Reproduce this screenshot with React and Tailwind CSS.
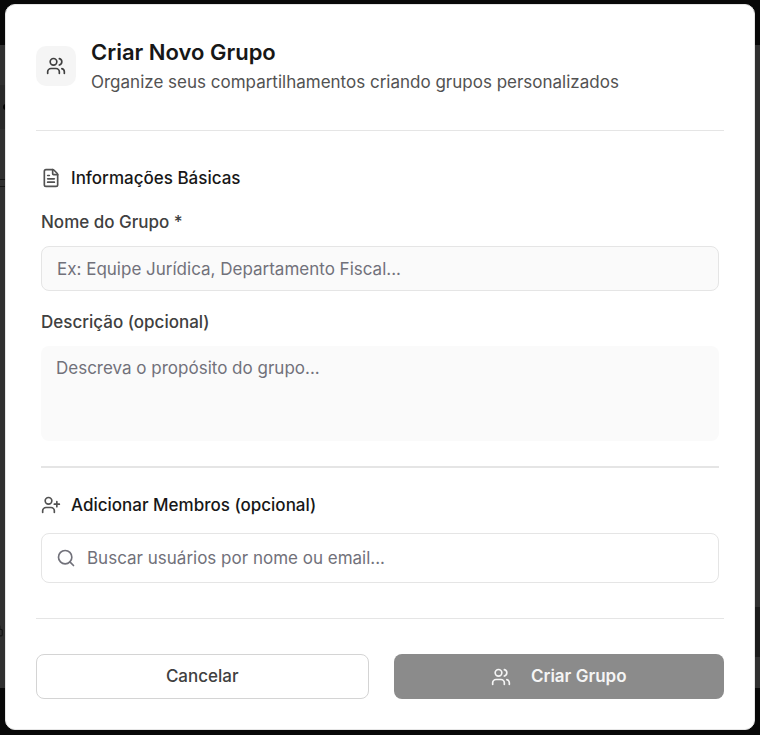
import { useState } from "react";
import { Users, FileText, UserPlus, Search, Lock } from "lucide-react";

function SectionTitle({ icon: Icon, children }) {
  return (
    <h3 className="flex items-center gap-2.5 text-[17px] leading-6 font-medium text-neutral-900">
      <Icon size={20} strokeWidth={2} className="text-neutral-600" />
      {children}
    </h3>
  );
}

// dimmed library page under the dialog
function LibraryPage() {
  return (
    <div aria-hidden="true" className="absolute inset-0 flex flex-col overflow-hidden bg-[#080808]">
      <div className="flex h-[45px] shrink-0 items-start pl-[136px]">
        <p className="-mt-4 text-lg leading-5 font-bold text-black">Biblioteca</p>
      </div>

      <div className="flex flex-1 justify-between bg-[#303030]">
        <div className="flex flex-col">
          <div className="h-10" />
          <div className="flex h-11 items-center bg-[#292929]">
            <span className="ml-[3px] size-1.5 rounded-full bg-black" />
          </div>
          <div className="mt-[50px] h-2 border-y border-[#151515]" />
          <div className="mt-auto mb-12 flex h-5 items-center">
            <Lock size={14} className="-ml-2.5 text-[#151515]" />
          </div>
        </div>

        <div className="flex w-[5px] flex-col justify-end">
          <div className="mb-[31px] h-[50px] bg-[#1c1c1c]" />
        </div>
      </div>

      <div className="h-[47px] shrink-0" />
    </div>
  );
}

export default function App() {
  const [name, setName] = useState("");
  const [description, setDescription] = useState("");
  const [search, setSearch] = useState("");

  return (
    <div className="relative min-h-screen px-[5px] pt-1 pb-[5px] font-['Inter',sans-serif]">
      <LibraryPage />

      <div
        role="dialog"
        aria-labelledby="dialog-title"
        className="relative rounded-[10px] border border-neutral-200 bg-white px-[30px] pt-[31px] pb-[30px]"
      >
        <header className="flex items-center gap-[15px] border-b border-neutral-200 pb-[34px]">
          <div className="flex size-10 shrink-0 items-center justify-center rounded-[10px] bg-neutral-100">
            <Users size={20} className="text-neutral-700" />
          </div>
          <div>
            <h2 id="dialog-title" className="text-[22px] leading-8 font-semibold text-neutral-900">
              Criar Novo Grupo
            </h2>
            <p className="text-[17px] leading-7 text-neutral-600">
              Organize seus compartilhamentos criando grupos personalizados
            </p>
          </div>
        </header>

        <form onSubmit={(e) => e.preventDefault()}>
          <div className="px-[5px] pt-[35px]">
            <SectionTitle icon={FileText}>Informações Básicas</SectionTitle>

            <label htmlFor="name" className="mt-5 block text-[17px] leading-6 font-medium text-neutral-700">
              Nome do Grupo *
            </label>
            <input
              id="name"
              type="text"
              value={name}
              onChange={(e) => setName(e.target.value)}
              placeholder="Ex: Equipe Jurídica, Departamento Fiscal..."
              className="mt-3 block h-[45px] w-full rounded-lg border border-neutral-200 bg-neutral-50 px-[15px] text-[17px] outline-none placeholder:text-[#71717a]"
            />

            <label htmlFor="description" className="mt-[19px] block text-[17px] leading-6 font-medium text-neutral-700">
              Descrição (opcional)
            </label>
            <textarea
              id="description"
              value={description}
              onChange={(e) => setDescription(e.target.value)}
              placeholder="Descreva o propósito do grupo..."
              className="mt-3 block h-[95px] w-full resize-none rounded-lg bg-neutral-50 px-[15px] py-2.5 text-[17px] leading-6 outline-none placeholder:text-[#71717a]"
            />

            <hr className="my-[25px] border-t-2 border-neutral-200" />

            <SectionTitle icon={UserPlus}>Adicionar Membros (opcional)</SectionTitle>

            <div className="relative mt-4">
              <Search size={20} className="absolute top-[15px] left-[15px] text-[#71717a]" />
              <input
                type="text"
                aria-label="Buscar usuários"
                value={search}
                onChange={(e) => setSearch(e.target.value)}
                placeholder="Buscar usuários por nome ou email..."
                className="block h-[50px] w-full rounded-lg border border-neutral-200 bg-white pr-4 pl-[45px] text-[17px] outline-none placeholder:text-[#71717a]"
              />
            </div>
          </div>

          <footer className="mt-[35px] flex gap-[25px] border-t border-neutral-200 pt-[35px]">
            <button
              type="button"
              className="h-[45px] flex-1 rounded-lg border border-neutral-300 bg-white text-[17px] font-medium text-neutral-700"
            >
              Cancelar
            </button>
            <button
              type="submit"
              className="flex h-[45px] flex-1 items-center justify-center gap-5 rounded-lg bg-[#8b8b8b] text-[17px] font-semibold text-neutral-100"
            >
              <Users size={20} />
              Criar Grupo
            </button>
          </footer>
        </form>
      </div>
    </div>
  );
}
